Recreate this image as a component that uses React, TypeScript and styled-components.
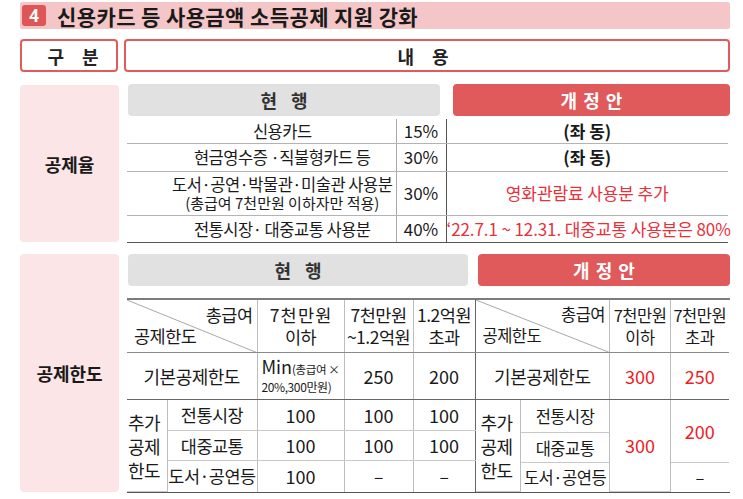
import React from "react";
import styled, { createGlobalStyle } from "styled-components";

const Global = createGlobalStyle`
  html, body { margin: 0; padding: 0; background: #fff; }
  body { font-family: "Noto Sans CJK KR", "Noto Sans", sans-serif; color: #1a1a1a; }
  * { box-sizing: border-box; }
`;

const Page = styled.div`
  width: 743px;
  height: 499px;
  padding: 2px 13px 0 20px;
  overflow: hidden;
`;

const TitleBar = styled.div`
  height: 27px;
  background: #f5c6c7;
  border-radius: 2px;
  display: flex;
  align-items: center;
  padding-left: 2px;
`;

const Badge = styled.div`
  width: 24px;
  height: 21px;
  background: #e05555;
  border-radius: 3px;
  color: #fff;
  font-weight: 700;
  font-size: 17px;
  display: flex;
  align-items: center;
  justify-content: center;
  font-family: "Noto Sans", sans-serif;
`;

const Title = styled.div`
  margin-left: 11px;
  font-size: 21px;
  font-weight: 700;
  color: #1a1a1a;
  letter-spacing: 0.4px;
`;

const HeadRow = styled.div`
  margin-top: 10px;
  display: flex;
  gap: 6px;
  height: 33px;
`;

const HeadBox = styled.div<{ $w?: number; $padL?: number; $padR?: number }>`
  ${(p) => (p.$w ? `width: ${p.$w}px;` : "flex: 1;")}
  border: 2px solid #e25b5b;
  border-radius: 4px;
  display: flex;
  align-items: center;
  justify-content: center;
  padding-left: ${(p) => p.$padL ?? 0}px;
  padding-right: ${(p) => p.$padR ?? 0}px;
  font-size: 18px;
  font-weight: 700;
  color: #222;
  word-spacing: 14px;
`;

const Section = styled.div<{ $mt: number }>`
  margin-top: ${(p) => p.$mt}px;
  display: flex;
  gap: 8px;
`;

const SideLabel = styled.div<{ $h: number; $mt: number }>`
  width: 99px;
  height: ${(p) => p.$h}px;
  margin-top: ${(p) => p.$mt}px;
  background: #fbe5e6;
  border-radius: 4px;
  display: flex;
  align-items: center;
  justify-content: center;
  font-size: 18px;
  font-weight: 700;
  color: #1a1a1a;
`;

const Body = styled.div`
  flex: 1;
  display: flex;
  flex-direction: column;
`;

const Tabs = styled.div<{ $gap: number }>`
  display: flex;
  gap: ${(p) => p.$gap}px;
  height: 32px;
  padding-left: 1px;
`;

const Tab = styled.div<{ $w?: number; $red?: boolean }>`
  ${(p) => (p.$w ? `width: ${p.$w}px;` : "flex: 1;")}
  background: ${(p) => (p.$red ? "#e05a5c" : "#e1e1e1")};
  color: ${(p) => (p.$red ? "#fff" : "#333")};
  border-radius: 4px;
  display: flex;
  align-items: center;
  justify-content: center;
  font-size: 18px;
  font-weight: 700;
  word-spacing: ${(p) => (p.$red ? "2px" : "10px")};
`;

const RateTable = styled.table`
  margin-top: 3px;
  width: 601px;
  border-collapse: collapse;
  table-layout: fixed;
  font-size: 16.5px;
  letter-spacing: -0.5px;
`;

const RateRow = styled.tr<{ $h: number; $last?: boolean }>`
  height: ${(p) => p.$h}px;
  td {
    border-bottom: ${(p) => (p.$last ? "1.5px solid #555" : "1px solid #b3b3b3")};
  }
`;

const RateCell = styled.td<{ $line?: "light" | "dark"; $red?: boolean; $bold?: boolean; $padL?: number }>`
  padding: 0 0 0 ${(p) => p.$padL ?? 0}px;
  text-align: center;
  vertical-align: middle;
  line-height: 20px;
  white-space: nowrap;
  color: ${(p) => (p.$red ? "#e8303a" : "#1a1a1a")};
  font-weight: ${(p) => (p.$bold ? 700 : 400)};
  font-size: ${(p) => (p.$red || p.$bold ? "17px" : "inherit")};
  letter-spacing: ${(p) => (p.$red ? "-0.1px" : p.$bold ? "0" : "inherit")};
  border-right: ${(p) =>
    p.$line === "light" ? "1px solid #a8a8a8" : p.$line === "dark" ? "1.5px solid #555" : "none"};
`;

const Small = styled.div`
  font-size: 15px;
  line-height: 18px;
  letter-spacing: 0;
`;

const Pct = styled.span`
  font-size: 17px;
  letter-spacing: 0;
`;

const Grid = styled.div`
  margin-top: 12px;
  display: flex;
  border-top: 2px solid #7c7c7c;
  border-bottom: 1.5px solid #555;
`;

const LimitTable = styled.table<{ $w: number; $fs: number; $divider?: boolean }>`
  width: ${(p) => p.$w}px;
  border-collapse: collapse;
  table-layout: fixed;
  font-size: ${(p) => p.$fs}px;
  letter-spacing: -0.5px;
  ${(p) => (p.$divider ? "border-right: 1.5px solid #666;" : "")}
`;

const LRow = styled.tr<{ $h: number; $line?: "mid" | "dark" | "light" | "none" }>`
  height: ${(p) => p.$h}px;
  & > td {
    border-bottom: ${(p) =>
      p.$line === "mid"
        ? "1px solid #8a8a8a"
        : p.$line === "dark"
        ? "1.5px solid #666"
        : p.$line === "light"
        ? "1px solid #c8c8c8"
        : "none"};
  }
`;

const LCell = styled.td<{ $red?: boolean; $noRight?: boolean; $big?: boolean }>`
  padding: 0;
  text-align: center;
  vertical-align: middle;
  line-height: 22px;
  font-size: ${(p) => (p.$big ? "18px" : "inherit")};
  color: ${(p) => (p.$red ? "#ee1c25" : "#1a1a1a")};
  border-right: ${(p) => (p.$noRight ? "none" : "1px solid #bdbdbd")};
  white-space: nowrap;
`;

const Spaced = styled.span`
  letter-spacing: 1.2px;
  margin-right: -1.2px;
`;

const Num = styled.span`
  font-size: 18px;
  letter-spacing: 0;
`;

const DiagCell = styled.td`
  position: relative;
  padding: 0;
  border-right: 1px solid #bdbdbd;
  vertical-align: top;
`;

const DiagSvg = styled.svg`
  position: absolute;
  left: 0;
  top: 0;
  width: 100%;
  height: 100%;
`;

const DiagTop = styled.div`
  position: relative;
  text-align: right;
  padding: 4px 4px 0 0;
  line-height: 21px;
`;

const DiagBottom = styled.div`
  position: relative;
  text-align: left;
  padding-left: 7px;
  line-height: 21px;
`;

const AddLabel = styled.td<{ $padL: number }>`
  padding: 0 0 0 ${(p) => p.$padL}px;
  text-align: left;
  vertical-align: middle;
  line-height: 24px;
  font-size: 18px;
  letter-spacing: -0.5px;
  border-right: 1px solid #bdbdbd;
`;

const MinBox = styled.div`
  text-align: left;
  padding-left: 4px;
  line-height: 17px;
`;

const MinBig = styled.span`
  font-size: 18px;
  letter-spacing: 0;
`;

const MinSmall = styled.span`
  font-size: 11.5px;
  letter-spacing: -0.4px;
`;

const MinLine2 = styled.div`
  font-size: 12px;
  letter-spacing: -0.4px;
`;

const Diagonal = () => (
  <DiagSvg viewBox="0 0 100 100" preserveAspectRatio="none">
    <line x1="0" y1="0" x2="100" y2="100" stroke="#a8a8a8" strokeWidth="1" vectorEffect="non-scaling-stroke" />
  </DiagSvg>
);

export default function App() {
  return (
    <>
      <Global />
      <Page>
        <TitleBar>
          <Badge>4</Badge>
          <Title>신용카드 등 사용금액 소득공제 지원 강화</Title>
        </TitleBar>

        <HeadRow>
          <HeadBox $w={98} $padL={8}>구 분</HeadBox>
          <HeadBox $padR={8}>내 용</HeadBox>
        </HeadRow>

        <Section $mt={12}>
          <SideLabel $h={157} $mt={1}>공제율</SideLabel>
          <Body>
            <Tabs $gap={13}>
              <Tab $w={312}>현 행</Tab>
              <Tab $red>개 정 안</Tab>
            </Tabs>
            <RateTable>
              <colgroup>
                <col style={{ width: 269 }} />
                <col style={{ width: 50 }} />
                <col />
              </colgroup>
              <tbody>
                <RateRow $h={24}>
                  <RateCell $line="light" $padL={42}>신용카드</RateCell>
                  <RateCell $line="dark"><Pct>15%</Pct></RateCell>
                  <RateCell $bold>(좌 동)</RateCell>
                </RateRow>
                <RateRow $h={28}>
                  <RateCell $line="light" $padL={42}>현금영수증 ·직불형카드 등</RateCell>
                  <RateCell $line="dark"><Pct>30%</Pct></RateCell>
                  <RateCell $bold>(좌 동)</RateCell>
                </RateRow>
                <RateRow $h={44}>
                  <RateCell $line="light" $padL={42}>
                    <div>도서·공연·박물관·미술관 사용분</div>
                    <Small>(총급여 7천만원 이하자만 적용)</Small>
                  </RateCell>
                  <RateCell $line="dark"><Pct>30%</Pct></RateCell>
                  <RateCell $red>영화관람료 사용분 추가</RateCell>
                </RateRow>
                <RateRow $h={27} $last>
                  <RateCell $line="light" $padL={42}>전통시장· 대중교통 사용분</RateCell>
                  <RateCell $line="dark"><Pct>40%</Pct></RateCell>
                  <RateCell $red>‘22.7.1 ~ 12.31. 대중교통 사용분은 80%</RateCell>
                </RateRow>
              </tbody>
            </RateTable>
          </Body>
        </Section>

        <Section $mt={11}>
          <SideLabel $h={238} $mt={0}>공제한도</SideLabel>
          <Body>
            <Tabs $gap={10}>
              <Tab $w={340}>현 행</Tab>
              <Tab $red>개 정 안</Tab>
            </Tabs>
            <Grid>
              <LimitTable $w={348} $fs={17.5} $divider>
                <colgroup>
                  <col style={{ width: 40 }} />
                  <col style={{ width: 90 }} />
                  <col style={{ width: 87 }} />
                  <col style={{ width: 69 }} />
                  <col style={{ width: 62 }} />
                </colgroup>
                <tbody>
                  <LRow $h={53} $line="mid">
                    <DiagCell colSpan={2}>
                      <Diagonal />
                      <DiagTop>총급여</DiagTop>
                      <DiagBottom>공제한도</DiagBottom>
                    </DiagCell>
                    <LCell><Spaced>7천만원</Spaced><br />이하</LCell>
                    <LCell>7천만원<br />~1.2억원</LCell>
                    <LCell $noRight>1.2억원<br />초과</LCell>
                  </LRow>
                  <LRow $h={47} $line="dark">
                    <LCell colSpan={2} $big>기본공제한도</LCell>
                    <LCell>
                      <MinBox>
                        <MinBig>Min</MinBig><MinSmall>(총급여 ×</MinSmall>
                        <MinLine2>20%,300만원)</MinLine2>
                      </MinBox>
                    </LCell>
                    <LCell><Num>250</Num></LCell>
                    <LCell $noRight><Num>200</Num></LCell>
                  </LRow>
                  <LRow $h={31} $line="light">
                    <AddLabel rowSpan={3} $padL={1}>추가<br />공제<br />한도</AddLabel>
                    <LCell>전통시장</LCell>
                    <LCell><Num>100</Num></LCell>
                    <LCell><Num>100</Num></LCell>
                    <LCell $noRight><Num>100</Num></LCell>
                  </LRow>
                  <LRow $h={30} $line="light">
                    <LCell>대중교통</LCell>
                    <LCell><Num>100</Num></LCell>
                    <LCell><Num>100</Num></LCell>
                    <LCell $noRight><Num>100</Num></LCell>
                  </LRow>
                  <LRow $h={31} $line="none">
                    <LCell>도서·공연등</LCell>
                    <LCell><Num>100</Num></LCell>
                    <LCell>–</LCell>
                    <LCell $noRight>–</LCell>
                  </LRow>
                </tbody>
              </LimitTable>
              <LimitTable $w={253} $fs={16.5}>
                <colgroup>
                  <col style={{ width: 45 }} />
                  <col style={{ width: 89 }} />
                  <col style={{ width: 61 }} />
                  <col style={{ width: 58 }} />
                </colgroup>
                <tbody>
                  <LRow $h={53} $line="mid">
                    <DiagCell colSpan={2}>
                      <Diagonal />
                      <DiagTop>총급여</DiagTop>
                      <DiagBottom>공제한도</DiagBottom>
                    </DiagCell>
                    <LCell>7천만원<br />이하</LCell>
                    <LCell $noRight>7천만원<br />초과</LCell>
                  </LRow>
                  <LRow $h={47} $line="dark">
                    <LCell colSpan={2} $big>기본공제한도</LCell>
                    <LCell $red><Num>300</Num></LCell>
                    <LCell $red $noRight><Num>250</Num></LCell>
                  </LRow>
                  <LRow $h={33} $line="light">
                    <AddLabel rowSpan={3} $padL={5}>추가<br />공제<br />한도</AddLabel>
                    <LCell>전통시장</LCell>
                    <LCell rowSpan={3} $red><Num>300</Num></LCell>
                    <LCell rowSpan={2} $red $noRight><Num>200</Num></LCell>
                  </LRow>
                  <LRow $h={30} $line="light">
                    <LCell>대중교통</LCell>
                  </LRow>
                  <LRow $h={29} $line="none">
                    <LCell>도서·공연등</LCell>
                    <LCell $noRight>–</LCell>
                  </LRow>
                </tbody>
              </LimitTable>
            </Grid>
          </Body>
        </Section>
      </Page>
    </>
  );
}
